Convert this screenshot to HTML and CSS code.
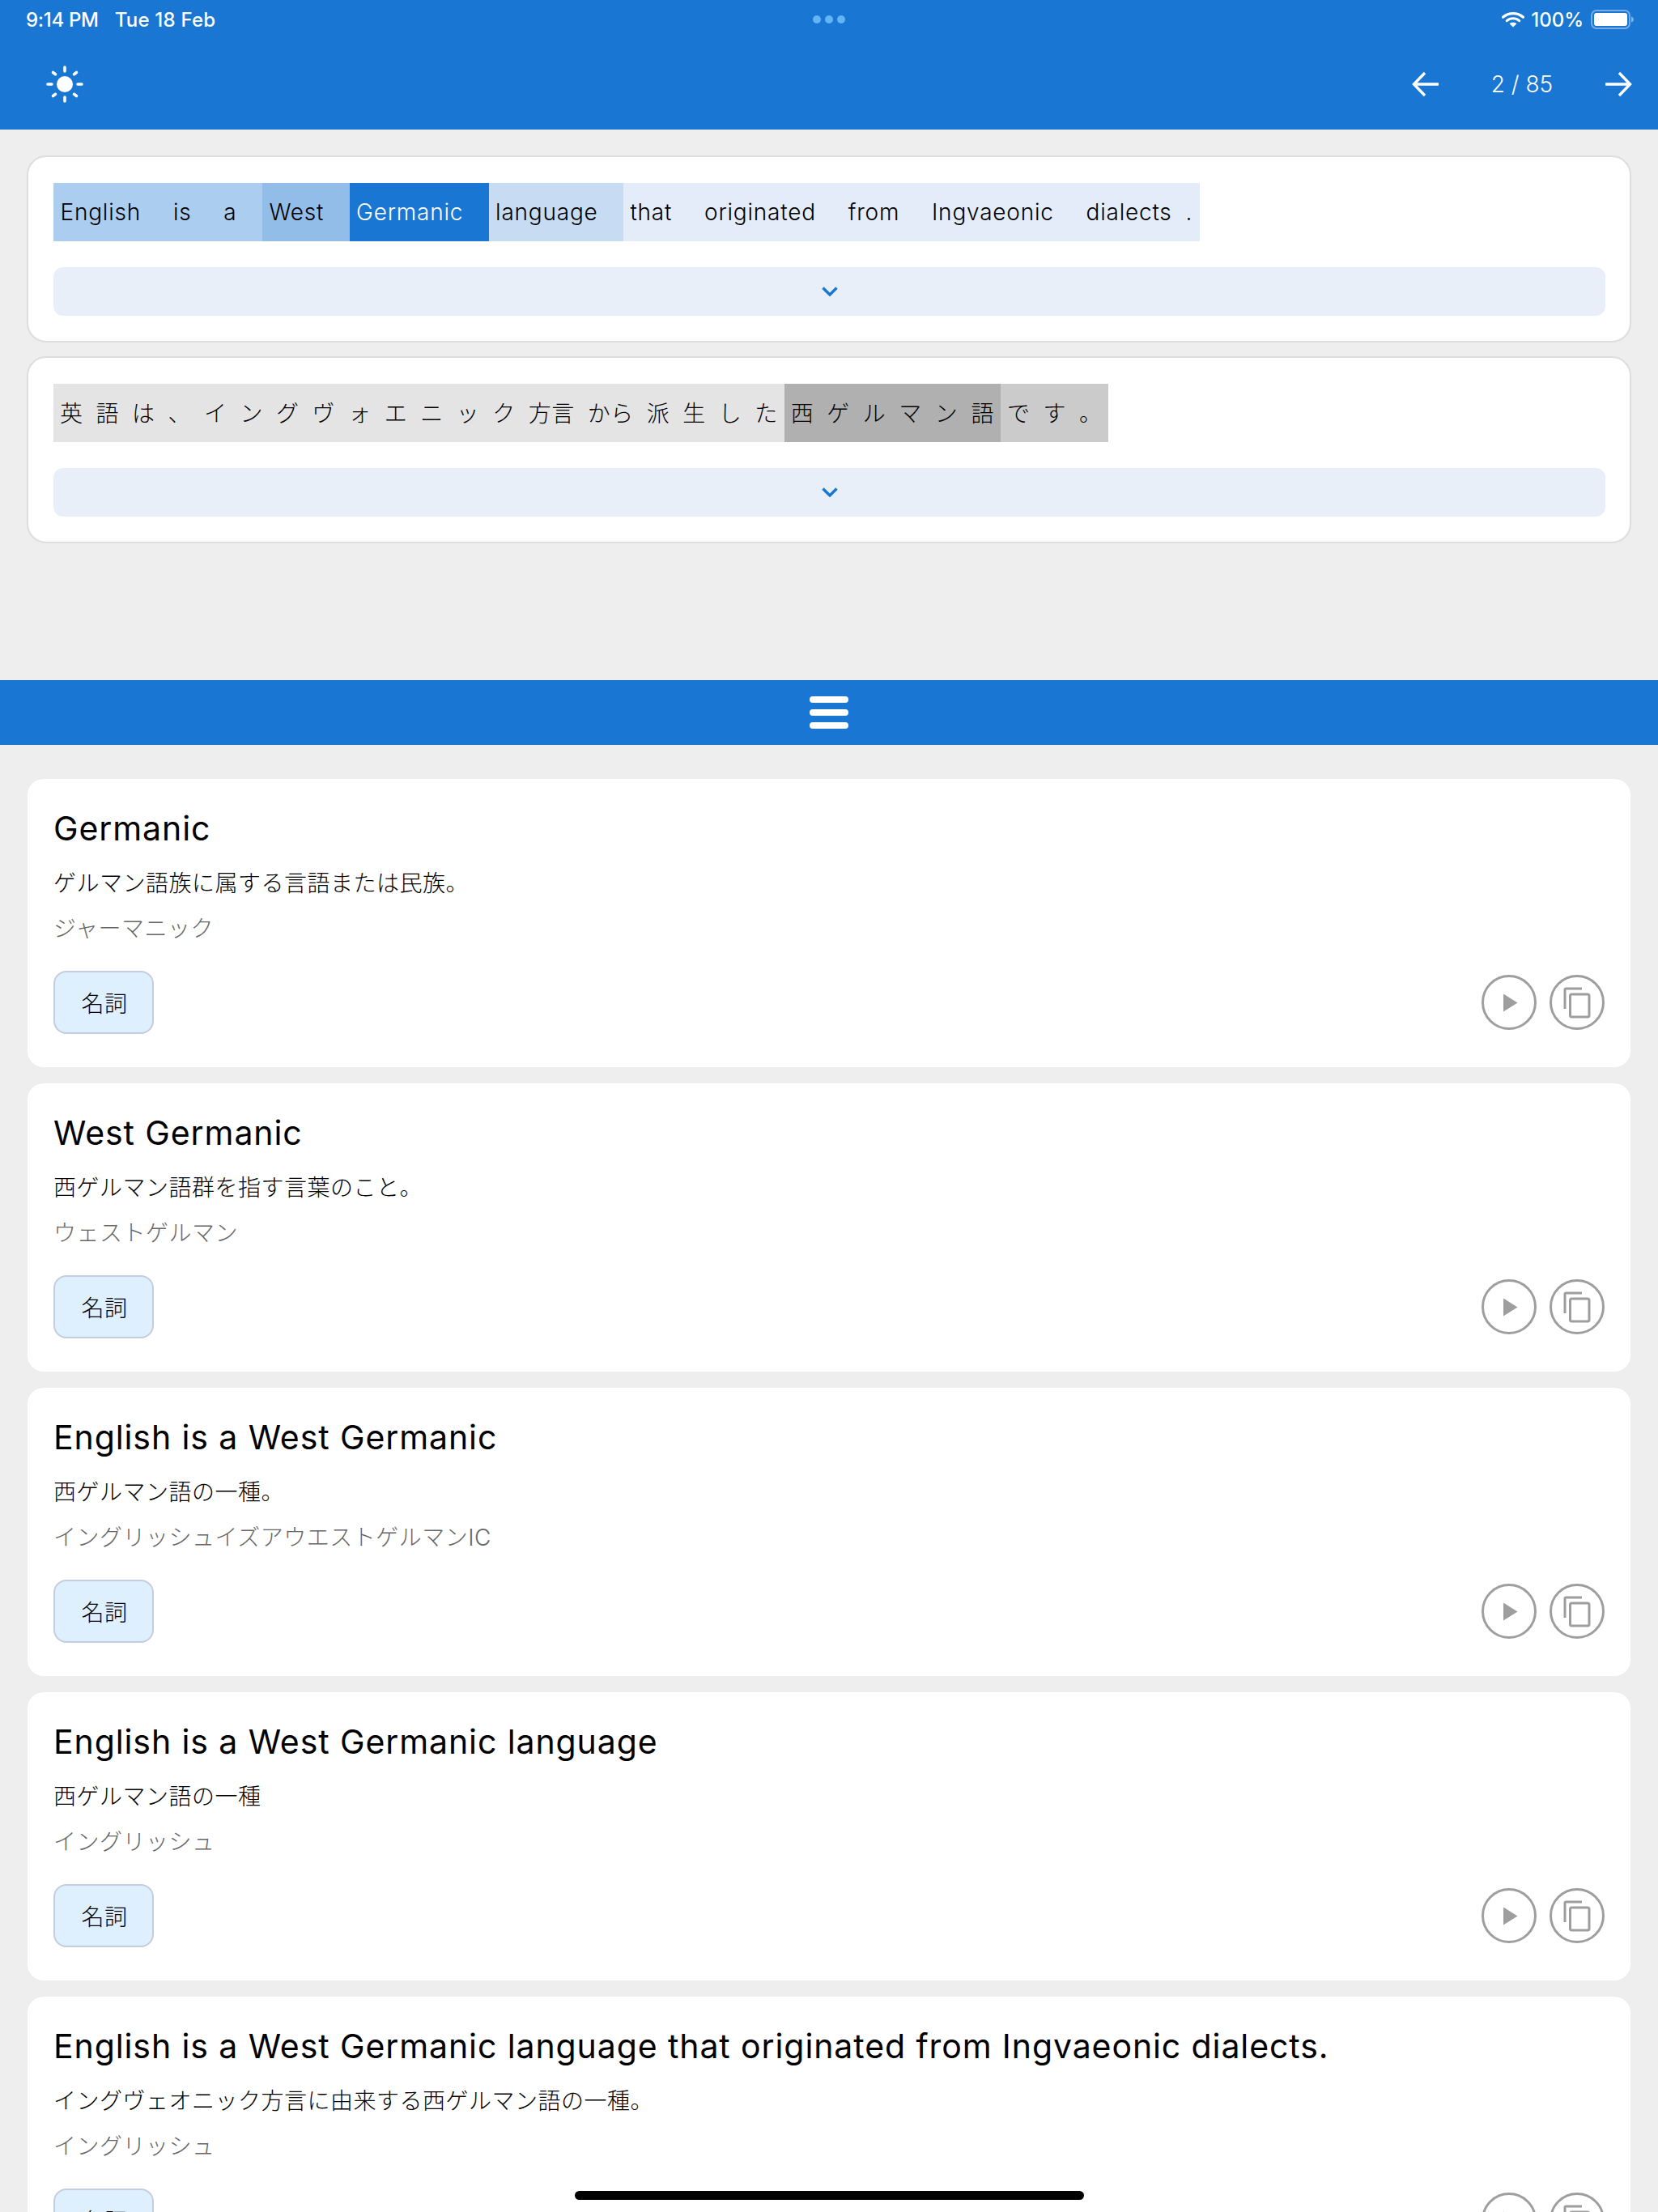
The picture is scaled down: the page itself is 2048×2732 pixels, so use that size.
FILE: index.html
```html
<!DOCTYPE html>
<html lang="ja">
<head>
<meta charset="utf-8">
<title>Reader</title>
<link rel="stylesheet" href="styles.css">
</head>
<body>
<div class="page">
  <header class="appbar">
    <div class="status">
      <div class="status-left"><span class="time">9:14 PM</span><span class="date">Tue 18 Feb</span></div>
      <div class="dots"><i></i><i></i><i></i></div>
      <div class="status-right">
        <svg class="wifi" viewBox="0 0 28 20" width="28" height="20"><path d="M1.5 7.2C8.6 1 19.4 1 26.5 7.2" fill="none" stroke="#fff" stroke-width="3.2" stroke-linecap="round"/><path d="M6.3 11.6C10.8 7.8 17.2 7.8 21.7 11.6" fill="none" stroke="#fff" stroke-width="3.2" stroke-linecap="round"/><path d="M14 19.6 9.6 15.2C12.2 13.3 15.8 13.3 18.4 15.2Z" fill="#fff"/></svg>
        <span class="pct">100%</span>
        <svg class="battery" viewBox="0 0 53 24" width="53" height="24"><rect x="1" y="1" width="47" height="22" rx="6" fill="none" stroke="#fff" stroke-opacity=".4" stroke-width="2"/><rect x="4" y="4" width="41" height="16" rx="3" fill="#fff"/><path d="M50 8.5c2 .5 3 2 3 3.500s-1 3-3 3.500Z" fill="#fff" fill-opacity=".45"/></svg>
      </div>
    </div>
    <div class="toolbar">
      <svg class="sun" viewBox="0 0 48 48" width="48" height="48"><circle cx="24" cy="24" r="10" fill="#fff"/><g stroke="#fff" stroke-width="3.600" stroke-linecap="round"><path d="M24 3v5M24 40v5M3 24h5M40 24h5M9.500 9.500l3 2.200M38.500 9.500l-3 2.200M9.500 38.500l3-2.200M38.500 38.500l-3-2.200"/></g></svg>
      <div class="pager">
        <svg class="arrow" viewBox="0 0 34 32" width="34" height="32"><path d="M33 16H3M16 2 2.500 16 16 30" fill="none" stroke="#fff" stroke-width="3.400"/></svg>
        <span class="count">2 / 85</span>
        <svg class="arrow" viewBox="0 0 34 32" width="34" height="32"><path d="M1 16h30M18 2l13.500 14L18 30" fill="none" stroke="#fff" stroke-width="3.400"/></svg>
      </div>
    </div>
  </header>

  <section class="sentences">
    <div class="sentence">
      <div class="tokens en">
        <span class="tok sp b2">English</span><span class="tok sp b2">is</span><span class="tok sp b2">a</span><span class="tok sp b3">West</span><span class="tok sp b4">Germanic</span><span class="tok sp b1">language</span><span class="tok sp b0">that</span><span class="tok sp b0">originated</span><span class="tok sp b0">from</span><span class="tok sp b0">Ingvaeonic</span><span class="tok b0">dialects</span><span class="tok b0">.</span>
      </div>
      <div class="expand"><svg viewBox="0 0 20 12" width="20" height="12"><path d="M1.500 1.500 10 10l8.500-8.500" fill="none" stroke="#1976d2" stroke-width="3.400"/></svg></div>
    </div>
    <div class="sentence">
      <div class="tokens ja">
        <span class="tok g0">英</span><span class="tok g0">語</span><span class="tok g0">は</span><span class="tok g0">、</span><span class="tok g0">イ</span><span class="tok g0">ン</span><span class="tok g0">グ</span><span class="tok g0">ヴ</span><span class="tok g0">ォ</span><span class="tok g0">エ</span><span class="tok g0">ニ</span><span class="tok g0">ッ</span><span class="tok g0">ク</span><span class="tok g0">方言</span><span class="tok g0">から</span><span class="tok g0">派</span><span class="tok g0">生</span><span class="tok g0">し</span><span class="tok g0">た</span><span class="tok g2">西</span><span class="tok g2">ゲ</span><span class="tok g2">ル</span><span class="tok g2">マ</span><span class="tok g2">ン</span><span class="tok g2">語</span><span class="tok g1">で</span><span class="tok g1">す</span><span class="tok g1">。</span>
      </div>
      <div class="expand"><svg viewBox="0 0 20 12" width="20" height="12"><path d="M1.500 1.500 10 10l8.500-8.500" fill="none" stroke="#1976d2" stroke-width="3.400"/></svg></div>
    </div>
  </section>

  <div class="divider"><span class="ham"><i></i><i></i><i></i></span></div>

  <main class="results">
    <article class="card">
      <h2>Germanic</h2>
      <p class="mean">ゲルマン語族に属する言語または民族。</p>
      <p class="read">ジャーマニック</p>
      <div class="foot"><span class="tag">名詞</span><div class="acts">
        <span class="act"><svg viewBox="0 0 68 68" width="68" height="68"><circle cx="34" cy="34" r="32.500" fill="none" stroke="#9e9e9e" stroke-width="3"/><path d="M27 23.500 44.500 34.500 27 45.500Z" fill="#9e9e9e"/></svg></span>
        <span class="act"><svg viewBox="0 0 68 68" width="68" height="68"><circle cx="34" cy="34" r="32.500" fill="none" stroke="#9e9e9e" stroke-width="3"/><path d="M19 42V18.500c0-1 .5-1.500 1.500-1.500H40" fill="none" stroke="#9e9e9e" stroke-width="3"/><rect x="25.500" y="24" width="23.500" height="28" rx="2" fill="none" stroke="#9e9e9e" stroke-width="3"/></svg></span>
      </div></div>
    </article>
    <article class="card">
      <h2>West Germanic</h2>
      <p class="mean">西ゲルマン語群を指す言葉のこと。</p>
      <p class="read">ウェストゲルマン</p>
      <div class="foot"><span class="tag">名詞</span><div class="acts">
        <span class="act"><svg viewBox="0 0 68 68" width="68" height="68"><circle cx="34" cy="34" r="32.500" fill="none" stroke="#9e9e9e" stroke-width="3"/><path d="M27 23.500 44.500 34.500 27 45.500Z" fill="#9e9e9e"/></svg></span>
        <span class="act"><svg viewBox="0 0 68 68" width="68" height="68"><circle cx="34" cy="34" r="32.500" fill="none" stroke="#9e9e9e" stroke-width="3"/><path d="M19 42V18.500c0-1 .5-1.500 1.500-1.500H40" fill="none" stroke="#9e9e9e" stroke-width="3"/><rect x="25.500" y="24" width="23.500" height="28" rx="2" fill="none" stroke="#9e9e9e" stroke-width="3"/></svg></span>
      </div></div>
    </article>
    <article class="card">
      <h2>English is a West Germanic</h2>
      <p class="mean">西ゲルマン語の一種。</p>
      <p class="read">イングリッシュイズアウエストゲルマンIC</p>
      <div class="foot"><span class="tag">名詞</span><div class="acts">
        <span class="act"><svg viewBox="0 0 68 68" width="68" height="68"><circle cx="34" cy="34" r="32.500" fill="none" stroke="#9e9e9e" stroke-width="3"/><path d="M27 23.500 44.500 34.500 27 45.500Z" fill="#9e9e9e"/></svg></span>
        <span class="act"><svg viewBox="0 0 68 68" width="68" height="68"><circle cx="34" cy="34" r="32.500" fill="none" stroke="#9e9e9e" stroke-width="3"/><path d="M19 42V18.500c0-1 .5-1.500 1.500-1.500H40" fill="none" stroke="#9e9e9e" stroke-width="3"/><rect x="25.500" y="24" width="23.500" height="28" rx="2" fill="none" stroke="#9e9e9e" stroke-width="3"/></svg></span>
      </div></div>
    </article>
    <article class="card">
      <h2>English is a West Germanic language</h2>
      <p class="mean">西ゲルマン語の一種</p>
      <p class="read">イングリッシュ</p>
      <div class="foot"><span class="tag">名詞</span><div class="acts">
        <span class="act"><svg viewBox="0 0 68 68" width="68" height="68"><circle cx="34" cy="34" r="32.500" fill="none" stroke="#9e9e9e" stroke-width="3"/><path d="M27 23.500 44.500 34.500 27 45.500Z" fill="#9e9e9e"/></svg></span>
        <span class="act"><svg viewBox="0 0 68 68" width="68" height="68"><circle cx="34" cy="34" r="32.500" fill="none" stroke="#9e9e9e" stroke-width="3"/><path d="M19 42V18.500c0-1 .5-1.500 1.500-1.500H40" fill="none" stroke="#9e9e9e" stroke-width="3"/><rect x="25.500" y="24" width="23.500" height="28" rx="2" fill="none" stroke="#9e9e9e" stroke-width="3"/></svg></span>
      </div></div>
    </article>
    <article class="card">
      <h2>English is a West Germanic language that originated from Ingvaeonic dialects.</h2>
      <p class="mean">イングヴェオニック方言に由来する西ゲルマン語の一種。</p>
      <p class="read">イングリッシュ</p>
      <div class="foot"><span class="tag">名詞</span><div class="acts">
        <span class="act"><svg viewBox="0 0 68 68" width="68" height="68"><circle cx="34" cy="34" r="32.500" fill="none" stroke="#9e9e9e" stroke-width="3"/><path d="M27 23.500 44.500 34.500 27 45.500Z" fill="#9e9e9e"/></svg></span>
        <span class="act"><svg viewBox="0 0 68 68" width="68" height="68"><circle cx="34" cy="34" r="32.500" fill="none" stroke="#9e9e9e" stroke-width="3"/><path d="M19 42V18.500c0-1 .5-1.500 1.500-1.500H40" fill="none" stroke="#9e9e9e" stroke-width="3"/><rect x="25.500" y="24" width="23.500" height="28" rx="2" fill="none" stroke="#9e9e9e" stroke-width="3"/></svg></span>
      </div></div>
    </article>
  </main>
  <div class="home"></div>
</div>
</body>
</html>
```
FILE: styles.css
```css
* { box-sizing: border-box; }
html, body { margin: 0; padding: 0; }
body { width: 2048px; height: 2732px; overflow: hidden; background: #eee; font-family: Inter, "Noto Sans CJK JP", sans-serif; color: #000; }
.page { position: relative; width: 2048px; height: 2732px; overflow: hidden; background: #eee; }

.appbar { height: 160px; background: #1976d2; color: #fff; display: flex; flex-direction: column; }
.status { height: 48px; padding: 0 30px 0 32px; display: flex; align-items: center; justify-content: space-between; font-size: 24px; font-weight: 500; position: relative; }
.status-left { display: flex; gap: 20px; }
.time { letter-spacing: -.3px; }
.date { letter-spacing: .2px; }
.status-right { display: flex; align-items: center; gap: 0; }
.wifi { margin-right: 8px; }
.pct { margin-right: 9px; font-size: 24px; }
.dots { position: absolute; left: 1004px; top: 19px; display: flex; gap: 5px; }
.dots i { width: 10px; height: 10px; border-radius: 50%; background: #64b5f6; }

.toolbar { flex: 1; padding: 0 32px 0 56px; display: flex; align-items: center; justify-content: space-between; }
.pager { display: flex; align-items: center; }
.count { width: 204px; text-align: center; font-size: 28px; font-weight: 300; color: #fff; }

.sentences { height: 680px; padding: 32px 33px 0 33px; display: flex; flex-direction: column; gap: 17px; }
.sentence { height: 231px; background: #fff; border: 2px solid #ddd; border-radius: 24px; padding: 32px 30px 0 31px; display: flex; flex-direction: column; }
.tokens { display: flex; height: 72px; align-self: flex-start; }
.tok { display: flex; align-items: center; height: 72px; padding: 0 8.5px; font-size: 28px; font-weight: 350; white-space: nowrap; letter-spacing: .78px; }
.tok.sp { padding-right: 31.4px; }
.ja .tok { padding: 0 8px 2px; font-weight: 300; letter-spacing: .5px; }
.b0 { background: #e3ecf8; }
.b1 { background: #c7dcf3; }
.b2 { background: #abcdf0; }
.b3 { background: #93bde9; }
.b4 { background: #1976d2; color: #fff; }
.g0 { background: #e4e4e4; }
.g1 { background: #cbcbcb; }
.g2 { background: #b0b0b0; }
.expand { margin-top: 32px; height: 60px; border-radius: 12px; background: #e8eff9; display: flex; align-items: center; justify-content: center; }

.divider { height: 80px; background: #1976d2; display: flex; align-items: center; justify-content: center; }
.ham { display: flex; flex-direction: column; gap: 8px; }
.ham i { display: block; width: 48px; height: 8px; border-radius: 4px; background: #fff; }

.results { padding: 42px 34px 0 34px; display: flex; flex-direction: column; gap: 20px; }
.card { height: 356px; flex: none; background: #fff; border-radius: 20px; padding: 33px 32px 0; display: flex; flex-direction: column; }
.card h2 { margin: 0; font-size: 41px; font-weight: 400; line-height: 56px; letter-spacing: .9px; white-space: nowrap; }
.mean { margin: 20px 0 0; font-size: 28px; font-weight: 300; line-height: 40px; letter-spacing: .5px; }
.read { margin: 16px 0 0; font-size: 28px; font-weight: 300; line-height: 40px; letter-spacing: .5px; color: #666; }
.foot { margin-top: 32px; display: flex; align-items: center; justify-content: space-between; }
.tag { width: 124px; height: 78px; padding-left: 2px; border: 2px solid #c3cddd; border-radius: 16px; background: #deeffe; font-size: 28px; font-weight: 300; letter-spacing: .5px; display: flex; align-items: center; justify-content: center; }
.acts { display: flex; gap: 16px; }
.act { display: block; width: 68px; height: 68px; }
.act svg { display: block; }

.home { position: absolute; left: 710px; top: 2706px; width: 629px; height: 11px; border-radius: 6px; background: #000; }
```
